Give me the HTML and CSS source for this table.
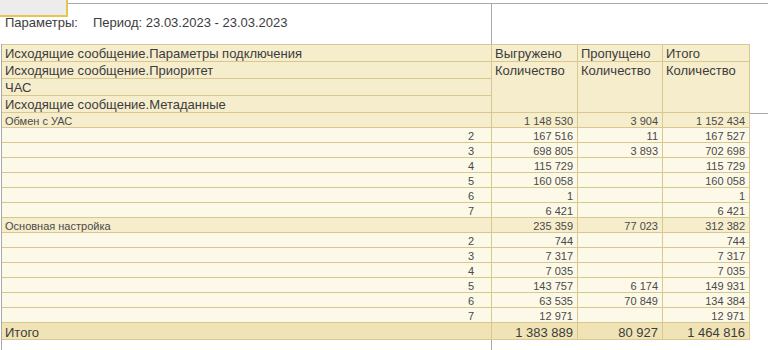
FILE: index.html
```html
<!DOCTYPE html>
<html lang="ru">
<head>
<meta charset="utf-8">
<title>Отчет</title>
<link rel="stylesheet" href="styles.css">
</head>
<body>
<div class="page">
  <div class="cursor"></div>
  <div class="top">
    <div class="top-left">
      <span class="params">Параметры:</span><span class="period">Период: 23.03.2023 - 23.03.2023</span>
    </div>
  </div>
  <div class="sheet">
    <div class="table">
      <div class="hdr">
        <div class="c h lab r1">Исходящие сообщение.Параметры подключения</div>
        <div class="c h lab r2">Исходящие сообщение.Приоритет</div>
        <div class="c h lab r3">ЧАС</div>
        <div class="c h lab r4">Исходящие сообщение.Метаданные</div>
        <div class="c h col2 r1">Выгружено</div>
        <div class="c h col3 r1">Пропущено</div>
        <div class="c h col4 r1">Итого</div>
        <div class="c h col2 span">Количество</div>
        <div class="c h col3 span">Количество</div>
        <div class="c h col4 span">Количество</div>
      </div>

      <div class="row grp"><div class="c lab">Обмен с УАС</div><div class="c num">1 148 530</div><div class="c num">3 904</div><div class="c num">1 152 434</div></div>
      <div class="row det"><div class="c key">2</div><div class="c num">167 516</div><div class="c num">11</div><div class="c num">167 527</div></div>
      <div class="row det"><div class="c key">3</div><div class="c num">698 805</div><div class="c num">3 893</div><div class="c num">702 698</div></div>
      <div class="row det"><div class="c key">4</div><div class="c num">115 729</div><div class="c num"></div><div class="c num">115 729</div></div>
      <div class="row det"><div class="c key">5</div><div class="c num">160 058</div><div class="c num"></div><div class="c num">160 058</div></div>
      <div class="row det"><div class="c key">6</div><div class="c num">1</div><div class="c num"></div><div class="c num">1</div></div>
      <div class="row det"><div class="c key">7</div><div class="c num">6 421</div><div class="c num"></div><div class="c num">6 421</div></div>

      <div class="row grp"><div class="c lab">Основная настройка</div><div class="c num">235 359</div><div class="c num">77 023</div><div class="c num">312 382</div></div>
      <div class="row det"><div class="c key">2</div><div class="c num">744</div><div class="c num"></div><div class="c num">744</div></div>
      <div class="row det"><div class="c key">3</div><div class="c num">7 317</div><div class="c num"></div><div class="c num">7 317</div></div>
      <div class="row det"><div class="c key">4</div><div class="c num">7 035</div><div class="c num"></div><div class="c num">7 035</div></div>
      <div class="row det"><div class="c key">5</div><div class="c num">143 757</div><div class="c num">6 174</div><div class="c num">149 931</div></div>
      <div class="row det"><div class="c key">6</div><div class="c num">63 535</div><div class="c num">70 849</div><div class="c num">134 384</div></div>
      <div class="row det"><div class="c key">7</div><div class="c num">12 971</div><div class="c num"></div><div class="c num">12 971</div></div>

      <div class="row tot"><div class="c lab">Итого</div><div class="c num">1 383 889</div><div class="c num">80 927</div><div class="c num">1 464 816</div></div>
    </div>
    <div class="side"></div>
  </div>
  <div class="bottom"><div class="bottom-left"></div></div>
</div>
</body>
</html>
```

FILE: styles.css
```css
* { box-sizing: border-box; }
html, body { margin: 0; padding: 0; background: #ffffff; }
body { font-family: "Liberation Sans", Arial, sans-serif; color: #3c3c3c; }

.page { position: relative; width: 768px; height: 350px; overflow: hidden; }

.cursor {
  position: absolute; left: 0; top: 0;
  width: 68px; height: 17px;
  background: #ececec;
  border-right: 2px solid #e6c552;
  border-bottom: 2px solid #e6c552;
}

.top { margin-top: 3px; border-top: 1px solid #a9a9a9; height: 41px; }
.top-left {
  width: 492px; height: 40px;
  border-right: 1px solid #a9a9a9;
  padding: 11px 0 0 5px;
  font-size: 13px; line-height: 16px; color: #3c3c3c;
  white-space: nowrap;
}
.params { display: inline-block; width: 88px; }

.sheet { display: flex; align-items: flex-start; border-left: 1px solid #a9a9a9; margin-left: 1px; }
.table { width: 748px; border-top: 1px solid #d8c78f; }
.side { flex: 1; margin-top: 69px; border-top: 1px solid #a9a9a9; }

.hdr {
  display: grid;
  grid-template-columns: 490px 86px 85px 87px;
  grid-template-rows: repeat(4, 17px);
  background: #f6edcc;
}
.row {
  display: grid;
  grid-template-columns: 490px 86px 85px 87px;
  height: 15px;
}
.c {
  border-right: 1px solid #d8c78f;
  border-bottom: 1px solid #d8c78f;
  white-space: nowrap;
  overflow: hidden;
}
.h { font-size: 13px; line-height: 18px; padding: 0 3px; color: #3c3c3c; }
.hdr .lab { grid-column: 1; }
.hdr .r1 { grid-row: 1; }
.hdr .r2 { grid-row: 2; }
.hdr .r3 { grid-row: 3; }
.hdr .r4 { grid-row: 4; }
.hdr .col2 { grid-column: 2; }
.hdr .col3 { grid-column: 3; }
.hdr .col4 { grid-column: 4; }
.hdr .span { grid-row: 2 / span 3; }

.row .c { font-size: 11px; line-height: 16px; color: #4a4a4a; }
.row .lab { padding-left: 3px; }
.row .key { text-align: right; padding-right: 17px; }
.row .num { text-align: right; padding-right: 4px; }

.grp { background: #f6edcc; }
.det { background: #fdf9e8; }
.tot { height: 17px; background: #f0e3b6; }
.tot .c { font-size: 13px; line-height: 19px; color: #3c3c3c; }

.bottom { height: 20px; border-left: 1px solid #a9a9a9; margin-left: 1px; }
.bottom-left { width: 490px; height: 20px; border-right: 1px solid #a9a9a9; }
```
